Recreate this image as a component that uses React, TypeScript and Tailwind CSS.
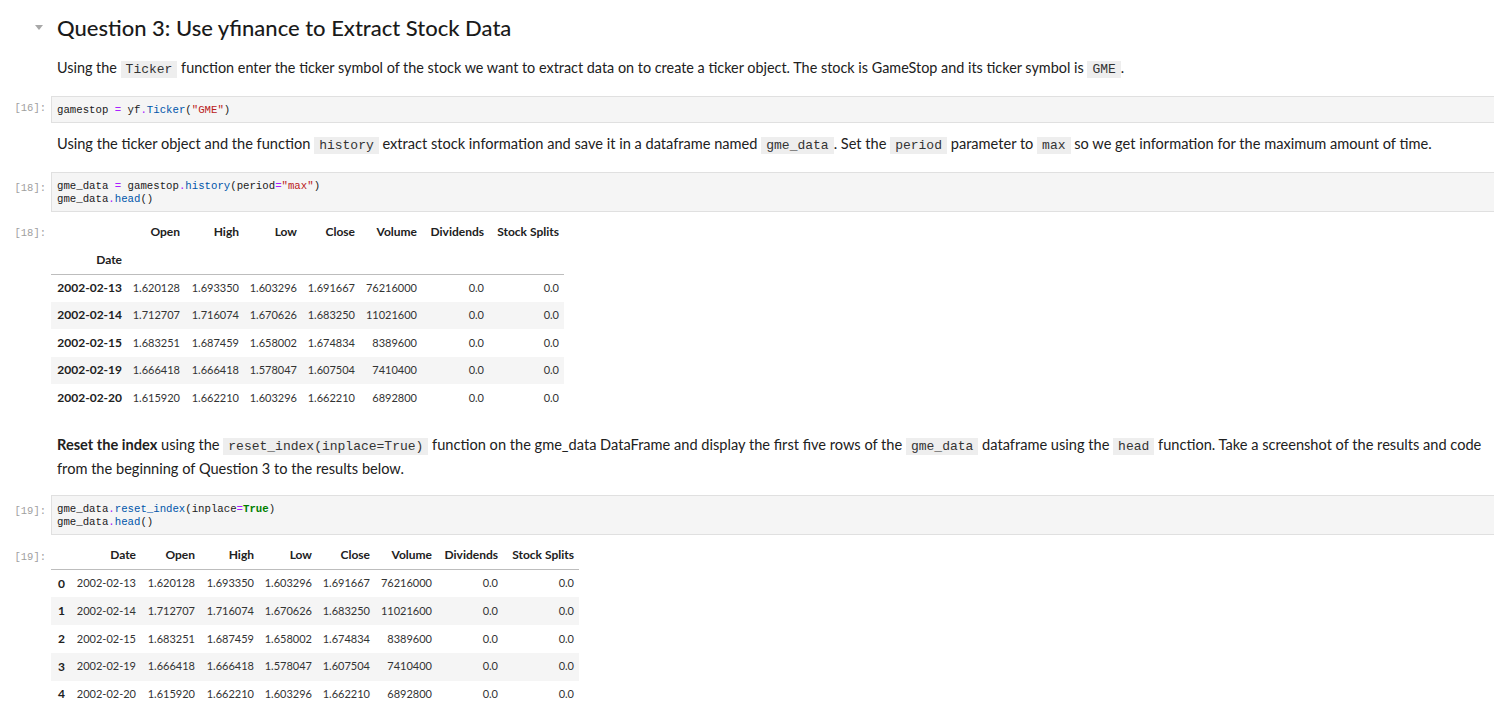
import React from "react";

const body = { fontFamily: "Lato, 'Open Sans', sans-serif" };
const mono = { fontFamily: "'Liberation Mono', 'DejaVu Sans Mono', monospace" };

function IC({ children }: { children: React.ReactNode }) {
  return (
    <code className="bg-[#eeeeee] px-[5px] py-[1px] text-[13px] text-[#333333]" style={mono}>
      {children}
    </code>
  );
}

function Prompt({ n, top }: { n: number; top?: string }) {
  return (
    <div
      className={`w-[51px] shrink-0 pr-[5px] text-right text-[10.5px] text-[#a0a0a0] ${top ?? ""}`}
      style={mono}
    >
      [{n}]:
    </div>
  );
}

function CodeCell({ n, lines }: { n: number; lines: React.ReactNode[] }) {
  return (
    <div className="flex">
      <Prompt n={n} top={lines.length > 1 ? "pt-[9px]" : "pt-[5px]"} />
      <div className="mr-[-2px] flex-1 border border-[#e0e0e0] bg-[#f5f5f5] px-[5px] pb-[5px] pt-[7px]">
        <pre className="text-[10.7px] leading-[13px] text-[#212121]" style={mono}>
          {lines.map((l, i) => (
            <div key={i}>{l}</div>
          ))}
        </pre>
      </div>
    </div>
  );
}

const op = "text-[#aa22ff]";
const prop = "text-[#0055aa]";
const str = "text-[#ba2121]";
const kw = "text-[#008000] font-bold";

type Row = string[];

const rows1: Row[] = [
  ["2002-02-13", "1.620128", "1.693350", "1.603296", "1.691667", "76216000", "0.0", "0.0"],
  ["2002-02-14", "1.712707", "1.716074", "1.670626", "1.683250", "11021600", "0.0", "0.0"],
  ["2002-02-15", "1.683251", "1.687459", "1.658002", "1.674834", "8389600", "0.0", "0.0"],
  ["2002-02-19", "1.666418", "1.666418", "1.578047", "1.607504", "7410400", "0.0", "0.0"],
  ["2002-02-20", "1.615920", "1.662210", "1.603296", "1.662210", "6892800", "0.0", "0.0"],
];

const heads = ["Open", "High", "Low", "Close", "Volume", "Dividends", "Stock Splits"];

const thC = "px-[5px] text-right font-bold text-[12px] whitespace-nowrap overflow-visible";
const tdC = "px-[5px] text-right text-[11px] whitespace-nowrap overflow-visible font-normal text-[#333333]";

function Table1() {
  const widths = [76, 58, 59, 58, 58, 62, 67, 75];
  const total = widths.reduce((a, b) => a + b, 0);
  return (
    <table className="table-fixed border-collapse text-[#212121]" style={{ ...body, width: total }}>
      <colgroup>
        {widths.map((w, i) => (
          <col key={i} style={{ width: w }} />
        ))}
      </colgroup>
      <thead>
        <tr className="h-[28px]">
          <th></th>
          {heads.map((h) => (
            <th key={h} className={thC}>
              {h}
            </th>
          ))}
        </tr>
        <tr className="h-[28px] border-b border-[#bdbdbd]">
          <th className={thC}>Date</th>
          {heads.map((h) => (
            <th key={h}></th>
          ))}
        </tr>
      </thead>
      <tbody>
        {rows1.map((r, i) => (
          <tr key={i} className={`h-[27.5px] ${i % 2 === 1 ? "bg-[#f5f5f5]" : ""}`}>
            <th className={thC}>{r[0]}</th>
            {r.slice(1).map((c, j) => (
              <td key={j} className={tdC}>
                {c}
              </td>
            ))}
          </tr>
        ))}
      </tbody>
    </table>
  );
}

function Table2() {
  const widths = [19, 71, 59, 59, 58, 58, 62, 66, 76];
  const total = widths.reduce((a, b) => a + b, 0);
  return (
    <table className="table-fixed border-collapse text-[#212121]" style={{ ...body, width: total }}>
      <colgroup>
        {widths.map((w, i) => (
          <col key={i} style={{ width: w }} />
        ))}
      </colgroup>
      <thead>
        <tr className="h-[28px] border-b border-[#bdbdbd]">
          <th></th>
          {["Date", ...heads].map((h) => (
            <th key={h} className={thC}>
              {h}
            </th>
          ))}
        </tr>
      </thead>
      <tbody>
        {rows1.map((r, i) => (
          <tr key={i} className={`h-[27.75px] ${i % 2 === 1 ? "bg-[#f5f5f5]" : ""}`}>
            <th className={thC}>{i}</th>
            {r.map((c, j) => (
              <td key={j} className={tdC}>
                {c}
              </td>
            ))}
          </tr>
        ))}
      </tbody>
    </table>
  );
}

export default function App() {
  return (
    <div className="h-[718px] w-[1494px] overflow-hidden bg-white text-[#212121]" style={body}>
      {/* Heading */}
      <div className="relative flex h-[52px] items-center pl-[57px] pt-[2px]">
        <span className="absolute left-[35px] top-[25px] h-0 w-0 border-x-[4.5px] border-t-[5px] border-x-transparent border-t-[#a8a8a8]" />
        <h2 className="text-[22px] font-medium text-[#1a1a1a]">Question 3: Use yfinance to Extract Stock Data</h2>
      </div>

      <div className="flex h-[33px] items-center pl-[57px] text-[14.4px]">
        <p>
          Using the <IC>Ticker</IC> function enter the ticker symbol of the stock we want to extract data on to create a
          ticker object. The stock is GameStop and its ticker symbol is <IC>GME</IC>.
        </p>
      </div>

      <div className="mt-[11px]">
        <CodeCell
          n={16}
          lines={[
            <>
              gamestop <span className={op}>=</span> yf<span className={op}>.</span>
              <span className={prop}>Ticker</span>(<span className={str}>"GME"</span>)
            </>,
          ]}
        />
      </div>

      <div className="flex h-[42px] items-center pl-[57px] text-[14.6px]">
        <p>
          Using the ticker object and the function <IC>history</IC> extract stock information and save it in a
          dataframe named <IC>gme_data</IC>. Set the <IC>period</IC> parameter to <IC>max</IC> so we get information
          for the maximum amount of time.
        </p>
      </div>

      <div className="mt-[7px]">
        <CodeCell
          n={18}
          lines={[
            <>
              gme_data <span className={op}>=</span> gamestop<span className={op}>.</span>
              <span className={prop}>history</span>(period<span className={op}>=</span>
              <span className={str}>"max"</span>)
            </>,
            <>
              gme_data<span className={op}>.</span>
              <span className={prop}>head</span>()
            </>,
          ]}
        />
      </div>

      <div className="mt-[6px] flex">
        <Prompt n={18} top="pt-[8px]" />
        <Table1 />
      </div>

      <div className="pl-[57px] pt-[22px] text-[14.6px] leading-[22px]">
        <p className="whitespace-nowrap">
          <b>Reset the index</b> using the <IC>reset_index(inplace=True)</IC> function on the gme_data DataFrame and
          display the first five rows of the <IC>gme_data</IC> dataframe using the <IC>head</IC> function. Take a
          screenshot of the results and code
          <br />
          from the beginning of Question 3 to the results below.
        </p>
      </div>

      <div className="mt-[15px]">
        <CodeCell
          n={19}
          lines={[
            <>
              gme_data<span className={op}>.</span>
              <span className={prop}>reset_index</span>(inplace<span className={op}>=</span>
              <span className={kw}>True</span>)
            </>,
            <>
              gme_data<span className={op}>.</span>
              <span className={prop}>head</span>()
            </>,
          ]}
        />
      </div>

      <div className="mt-[7px] flex">
        <Prompt n={19} top="pt-[8px]" />
        <Table2 />
      </div>
    </div>
  );
}
